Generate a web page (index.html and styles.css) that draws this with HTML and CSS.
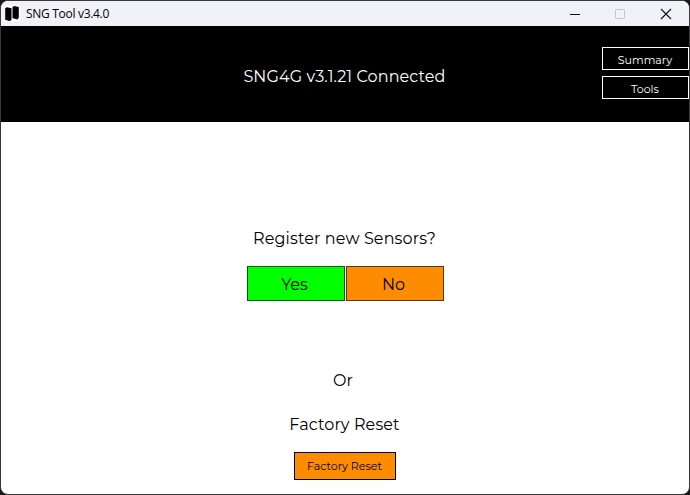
FILE: index.html
```html
<!DOCTYPE html>
<html lang="en">
<head>
<meta charset="utf-8">
<title>SNG Tool v3.4.0</title>
<link rel="stylesheet" href="styles.css">
</head>
<body>
<div class="window">
  <header class="titlebar">
    <svg class="logo" width="16" height="17" viewBox="0 0 16 17"><path fill="#fff" d="M0 0h15v17H0z"/><path d="M.2 3 2 2.200 6.500 3.300V14.500L5 16.200.2 14.800zM7.500 2 9.200 1 13.800 2V12.800L12.200 14.400 7.500 13z"/></svg>
    <span class="title">SNG Tool v3.4.0</span>
    <svg class="controls" width="105" height="14" viewBox="0 0 105 14" fill="none"><path stroke="#111" d="M1 7.500h10"/><rect x="46.500" y="2.500" width="9" height="9" rx="1" stroke="#c5c5ca"/><path stroke="#111" stroke-width="1.100" d="m92 2 10 10m0-10L92 12"/></svg>
  </header>
  <div class="banner">
    <h1 class="status">SNG4G v3.1.21 Connected</h1>
    <nav class="nav">
      <button class="nav-btn">Summary</button>
      <button class="nav-btn">Tools</button>
    </nav>
  </div>
  <main class="content">
    <p class="question">Register new Sensors?</p>
    <div class="choices">
      <button class="choice yes">Yes</button>
      <button class="choice no">No</button>
    </div>
    <p class="or">Or</p>
    <p class="reset-label">Factory Reset</p>
    <button class="reset">Factory Reset</button>
  </main>
</div>
</body>
</html>
```
FILE: styles.css
```css
* { box-sizing: border-box; margin: 0; }
body {
  background: #171717;
  font: 400 16px/20px Montserrat, Inter, sans-serif;
  color: #000;
}
button { font: inherit; color: inherit; padding: 0; border-radius: 0; }
.window {
  width: 690px;
  height: 495px;
  border: 1px solid #38383b;
  border-radius: 8px;
  overflow: hidden;
  background: #fff;
}
.titlebar {
  height: 25px;
  display: flex;
  align-items: center;
  padding: 0 15px 0 4px;
  background: #f1f2f8;
}
.title {
  margin-left: 5px;
  font: 12px/16px "Open Sans", sans-serif;
  letter-spacing: -0.3px;
}
.controls { margin-left: auto; }
.banner {
  height: 96px;
  display: grid;
  grid-template-columns: 87px 1fr 87px;
  background: #000;
  color: #fff;
}
.status {
  grid-column: 2;
  padding: 41px 1px 0 0;
  font-size: 16px;
  font-weight: 400;
  letter-spacing: 0.1px;
  text-align: center;
  white-space: nowrap;
}
.question, .reset-label {
  padding-right: 1px;
  letter-spacing: 0.12px;
}
.nav {
  padding-top: 21px;
  display: flex;
  flex-direction: column;
  gap: 6px;
}
.nav-btn {
  height: 23px;
  padding: 2px 1px 0 0;
  border: 1px solid #fff;
  background: #000;
  font-size: 11px;
  line-height: 18px;
}
.content {
  display: flex;
  flex-direction: column;
  align-items: center;
  padding-top: 107px;
}
.choices {
  display: flex;
  gap: 1px;
  margin-top: 17px;
}
.choice {
  width: 98px;
  height: 35px;
  padding: 2px 2px 0 0;
  border: 1px solid #5f3500;
}
.yes { background: #0f0; border-color: #006000; }
.no { background: #ff8c00; }
.or { margin-top: 70px; padding-right: 4px; }
.reset-label { margin-top: 24px; }
.reset {
  width: 102px;
  height: 28px;
  margin-top: 17px;
  padding-right: 1px;
  border: 1px solid #000;
  background: #ff8c00;
  font-size: 11px;
}
```
